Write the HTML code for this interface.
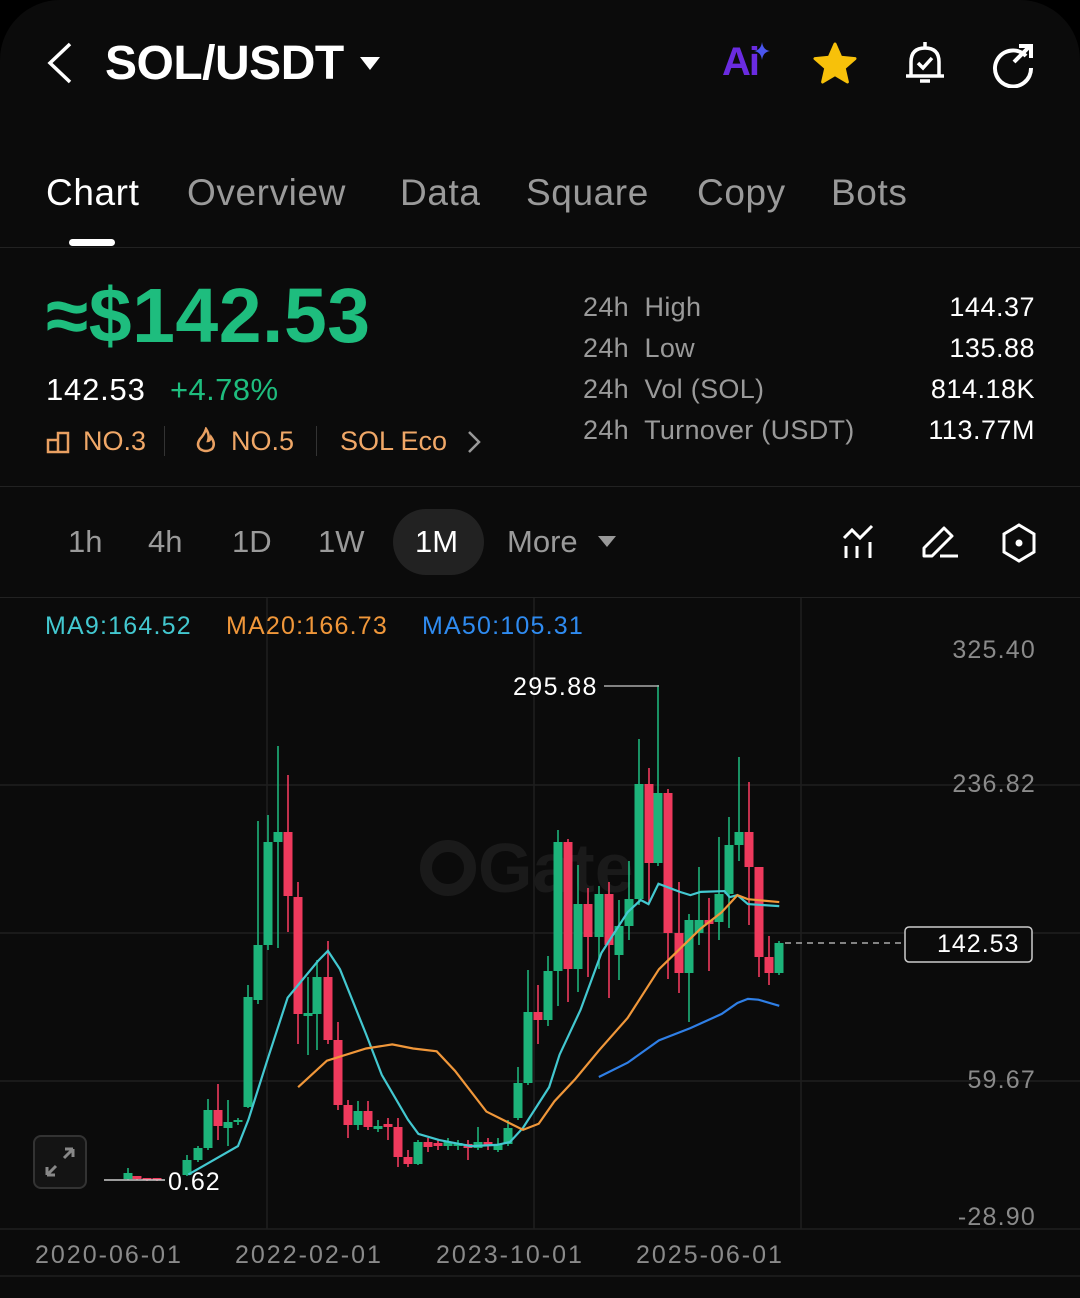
<!DOCTYPE html>
<html><head><meta charset="utf-8"><style>
*{margin:0;padding:0;box-sizing:border-box}
body{width:1080px;height:1298px;background:#000;font-family:"Liberation Sans",sans-serif;overflow:hidden;position:relative}
.pg{position:absolute;left:0;top:0;width:1080px;height:1298px;background:#0b0b0b;border-radius:60px 60px 0 0}
.a{position:absolute;white-space:nowrap}
.g{color:#9a9a9a}
.w{color:#fff}
.tab{letter-spacing:0.6px}
.ax{font-size:25px;color:#8a8a8a;letter-spacing:1.2px}
.dt{font-size:25px;color:#8a8a8a;letter-spacing:2px}
</style></head><body><div class="pg">
<!-- header -->
<svg class="a" style="left:44px;top:42px" width="30" height="42" viewBox="0 0 30 42"><path d="M26 2 L6 21 L26 40" fill="none" stroke="#fff" stroke-width="3.5"/></svg>
<div class="a w" style="left:105px;top:36px;font-size:48px;font-weight:bold;letter-spacing:-0.5px">SOL/USDT</div>
<svg class="a" style="left:359px;top:56px" width="22" height="16"><path d="M1 1 L21 1 L11 14Z" fill="#fff"/></svg>
<div class="a" style="left:722px;top:40px;font-size:40px;font-weight:bold;color:#6a2be0;letter-spacing:-2px">Ai</div>
<svg class="a" style="left:754px;top:42px" width="16" height="18"><path d="M8 0 Q9 8 16 9 Q9 10 8 18 Q7 10 0 9 Q7 8 8 0Z" fill="#4a56f0"/></svg>
<svg class="a" style="left:810px;top:40px" width="50" height="48" viewBox="0 0 24 24"><path d="M12 2 L14.9 8.6 L22 9.3 L16.6 14 L18.2 21 L12 17.3 L5.8 21 L7.4 14 L2 9.3 L9.1 8.6Z" fill="#f7c10a" stroke="#f7c10a" stroke-width="1.5" stroke-linejoin="round"/></svg>
<svg class="a" style="left:900px;top:38px" width="50" height="52" viewBox="0 0 50 52"><path d="M25 4 V9 M11 38 V24 Q11 10 25 10 Q39 10 39 24 V38 Z M6 38 H44 M20 43 H30" fill="none" stroke="#fff" stroke-width="3.5" stroke-linejoin="round"/><path d="M18 25 L23 30 L32 20" fill="none" stroke="#fff" stroke-width="3.5"/></svg>
<svg class="a" style="left:990px;top:42px" width="48" height="46" viewBox="0 0 48 46"><path d="M36 14 A18 18 0 1 0 41 26" fill="none" stroke="#fff" stroke-width="4"/><path d="M24 20 L40 4 M29 4 H41 V16" fill="none" stroke="#fff" stroke-width="4"/></svg>
<!-- tabs -->
<div class="a w tab" style="left:46px;top:172px;font-size:37px">Chart</div>
<div class="a g tab" style="left:187px;top:172px;font-size:37px">Overview</div>
<div class="a g tab" style="left:400px;top:172px;font-size:37px">Data</div>
<div class="a g tab" style="left:526px;top:172px;font-size:37px">Square</div>
<div class="a g tab" style="left:697px;top:172px;font-size:37px">Copy</div>
<div class="a g tab" style="left:831px;top:172px;font-size:37px">Bots</div>
<div class="a" style="left:69px;top:239px;width:46px;height:7px;background:#fff;border-radius:4px"></div>
<div class="a" style="left:0;top:247px;width:1080px;height:1px;background:#222"></div>
<!-- price -->
<div class="a" style="left:46px;top:272px;font-size:77px;font-weight:bold;color:#1ebd7e;letter-spacing:0.5px">≈$142.53</div>
<div class="a w" style="left:46px;top:372px;font-size:31px;letter-spacing:0.8px">142.53</div>
<div class="a" style="left:170px;top:372px;font-size:31px;color:#1ebd7e;letter-spacing:0.4px">+4.78%</div>
<svg class="a" style="left:46px;top:430px" width="24" height="24"><path d="M2 10 H12 V22 H2Z M12 22 H22 V3 H12 V10" fill="none" stroke="#e9a062" stroke-width="2.5"/></svg>
<div class="a" style="left:83px;top:426px;font-size:27px;color:#f0a868">NO.3</div>
<div class="a" style="left:164px;top:426px;width:1px;height:30px;background:#333"></div>
<svg class="a" style="left:194px;top:427px" width="24" height="26"><path d="M12 2 Q10 8 6 12 Q2 18 6 22 Q12 26 18 22 Q22 17 17 10 Q16 14 14 14 Q16 8 12 2Z" fill="none" stroke="#e9a062" stroke-width="2.5"/></svg>
<div class="a" style="left:231px;top:426px;font-size:27px;color:#f0a868">NO.5</div>
<div class="a" style="left:316px;top:426px;width:1px;height:30px;background:#333"></div>
<div class="a" style="left:340px;top:426px;font-size:27px;color:#f0a868">SOL Eco</div>
<svg class="a" style="left:466px;top:430px" width="16" height="24"><path d="M3 2 L13 12 L3 22" fill="none" stroke="#999" stroke-width="2.5"/></svg>
<div class="a g" style="left:583px;top:287px;font-size:27px;line-height:41px;letter-spacing:0.3px">24h&nbsp; High<br>24h&nbsp; Low<br>24h&nbsp; Vol (SOL)<br>24h&nbsp; Turnover (USDT)</div>
<div class="a w" style="right:45px;top:287px;font-size:27px;line-height:41px;text-align:right;letter-spacing:0.5px">144.37<br>135.88<br>814.18K<br>113.77M</div>
<div class="a" style="left:0;top:486px;width:1080px;height:1px;background:#222"></div>
<!-- timeframes -->
<div class="a g" style="left:68px;top:524px;font-size:31px">1h</div>
<div class="a g" style="left:148px;top:524px;font-size:31px">4h</div>
<div class="a g" style="left:232px;top:524px;font-size:31px">1D</div>
<div class="a g" style="left:318px;top:524px;font-size:31px">1W</div>
<div class="a" style="left:393px;top:509px;width:91px;height:66px;border-radius:33px;background:#222"></div>
<div class="a w" style="left:415px;top:524px;font-size:31px">1M</div>
<div class="a g" style="left:507px;top:524px;font-size:31px">More</div>
<svg class="a" style="left:598px;top:536px" width="18" height="12"><path d="M0 0 H18 L9 11Z" fill="#999"/></svg>
<svg class="a" style="left:840px;top:524px" width="40" height="38" viewBox="0 0 40 38"><path d="M4 14 L12 6 L20 14 L32 2 M6 22 V34 M17 22 V34 M30 18 V34" fill="none" stroke="#fff" stroke-width="3"/></svg>
<svg class="a" style="left:920px;top:524px" width="42" height="36" viewBox="0 0 42 36"><path d="M4 32 V24 L24 4 L32 12 L12 32 Z M20 32 H38" fill="none" stroke="#fff" stroke-width="3" stroke-linejoin="round"/></svg>
<svg class="a" style="left:1000px;top:522px" width="38" height="42" viewBox="0 0 38 42"><path d="M19 3 L34 12 V30 L19 39 L4 30 V12Z" fill="none" stroke="#fff" stroke-width="3"/><circle cx="19" cy="21" r="3.5" fill="#fff"/></svg>
<div class="a" style="left:0;top:597px;width:1080px;height:1px;background:#222"></div>
<!-- chart -->
<svg class="a" style="left:0;top:0" width="1080" height="1298">
<g stroke="#1f1f1f" stroke-width="1.5">
<line x1="0" y1="785" x2="1080" y2="785"/><line x1="0" y1="933" x2="1080" y2="933"/><line x1="0" y1="1081" x2="1080" y2="1081"/><line x1="0" y1="1229" x2="1080" y2="1229"/><line x1="0" y1="1276" x2="1080" y2="1276"/>
<line x1="267" y1="598" x2="267" y2="1229"/><line x1="534" y1="598" x2="534" y2="1229"/><line x1="801" y1="598" x2="801" y2="1229"/>
</g>
<circle cx="448" cy="868" r="22" fill="none" stroke="#1a1a1a" stroke-width="12"/>
<text x="478" y="892" font-family="Liberation Sans" font-weight="bold" font-size="70" fill="#1a1a1a">Gate</text>
<g id="cs"></g>
<g transform="translate(0,660) scale(0.523,0.4068)" fill="none" stroke-width="2.2">
<path vector-effect="non-scaling-stroke" stroke="#43c8d0" d="M360 1265 L455 1195 L475 1130 L512 980 L550 830 L608 740 L627 715 L650 760 L700 920 L730 1020 L780 1130 L800 1165 L840 1180 L900 1195 L950 1192 L975 1185 L1000 1150 L1050 1050 L1070 970 L1110 860 L1150 720 L1200 620 L1225 590 L1240 600 L1259 550 L1300 570 L1320 578 L1340 570 L1385 568 L1395 583 L1410 578 L1430 600 L1490 605"/>
<path vector-effect="non-scaling-stroke" stroke="#f0973a" d="M570 1050 L625 985 L700 955 L750 945 L790 955 L835 962 L870 1010 L930 1110 L1000 1155 L1030 1140 L1060 1085 L1100 1030 L1145 960 L1200 880 L1240 800 L1260 760 L1300 710 L1340 660 L1380 620 L1410 578 L1430 588 L1490 595"/>
<path vector-effect="non-scaling-stroke" stroke="#2f7fe6" d="M1145 1025 L1200 990 L1260 935 L1320 905 L1380 870 L1410 843 L1430 833 L1450 835 L1490 850"/>
</g>
<line x1="104" y1="1180" x2="165" y2="1180" stroke="#ccc" stroke-width="1.5"/>
<line x1="604" y1="686" x2="659" y2="686" stroke="#aaa" stroke-width="1.5"/>
<line x1="785" y1="943" x2="905" y2="943" stroke="#aaa" stroke-width="1.5" stroke-dasharray="6 5"/>
<rect x="905" y="927" width="127" height="35" rx="4" fill="#0b0b0b" stroke="#ccc" stroke-width="1.5"/>
<rect x="34" y="1136" width="52" height="52" rx="7" fill="#141414" stroke="#333" stroke-width="2"/>
<path d="M47 1175 L56 1166 M47 1175 V1167 M47 1175 H55 M73 1149 L64 1158 M73 1149 V1157 M73 1149 H65" stroke="#888" stroke-width="3" fill="none"/>
</svg>
<div class="a" style="left:45px;top:612px;font-size:25px;color:#43c8d0;letter-spacing:1.2px">MA9:164.52</div>
<div class="a" style="left:226px;top:612px;font-size:25px;color:#f0973a;letter-spacing:1.2px">MA20:166.73</div>
<div class="a" style="left:422px;top:612px;font-size:25px;color:#2f8bf0;letter-spacing:1.2px">MA50:105.31</div>
<div class="a ax" style="right:44px;top:636px">325.40</div>
<div class="a ax" style="right:44px;top:770px">236.82</div>
<div class="a ax" style="right:44px;top:1066px">59.67</div>
<div class="a ax" style="right:44px;top:1203px">-28.90</div>
<div class="a w" style="left:937px;top:930px;font-size:25px;letter-spacing:1px">142.53</div>
<div class="a w" style="left:513px;top:673px;font-size:25px;letter-spacing:1.4px">295.88</div>
<div class="a w" style="left:168px;top:1168px;font-size:25px;letter-spacing:1px">0.62</div>
<div class="a dt" style="left:35px;top:1241px">2020-06-01</div>
<div class="a dt" style="left:235px;top:1241px">2022-02-01</div>
<div class="a dt" style="left:436px;top:1241px">2023-10-01</div>
<div class="a dt" style="left:636px;top:1241px">2025-06-01</div>
</div>
<script>
var G="#1db37a",R="#ef3a5d";
var c=[[128,1173,1179,1168,1180,G],[137,1176,1179,1176,1180,R],[147,1178,1180,1178,1181,R],[157,1178,1180,1178,1181,R],
[187,1160,1175,1155,1176,G],[198,1148,1160,1146,1162,G],[208,1110,1148,1099,1150,G],[218,1110,1126,1084,1140,R],[228,1122,1128,1100,1146,G],[238,1120,1122,1118,1125,G],
[248,997,1107,985,1108,G],[258,945,1000,821,1004,G],[268,842,945,815,950,G],[278,832,842,746,948,G],[288,832,896,775,932,R],[298,897,1014,882,1044,R],
[308,1013,1016,977,1055,G],[317,977,1014,960,1050,G],[328,977,1040,941,1044,R],[338,1040,1105,1022,1110,R],[348,1105,1125,1100,1138,R],[358,1111,1125,1101,1130,G],
[368,1111,1127,1101,1130,R],[378,1126,1129,1120,1132,G],[388,1124,1127,1118,1140,R],[398,1127,1157,1118,1167,R],[408,1157,1164,1150,1167,R],[418,1142,1164,1140,1165,G],
[428,1142,1147,1138,1152,R],[438,1143,1146,1140,1150,R],[448,1142,1146,1138,1150,G],[458,1143,1146,1140,1150,G],[468,1144,1148,1140,1160,R],[478,1142,1148,1127,1150,G],
[488,1142,1145,1138,1150,R],[498,1144,1150,1138,1152,G],[508,1128,1144,1120,1146,G],[518,1083,1118,1067,1120,G],[528,1012,1083,970,1085,G],[538,1012,1020,985,1044,R],
[548,971,1020,956,1026,G],[558,842,971,830,1006,G],[568,842,969,839,1002,R],[578,904,969,865,992,G],[588,904,937,888,977,R],[599,894,937,886,969,G],
[609,894,945,882,998,R],[619,926,955,900,980,G],[629,899,926,861,940,G],[639,784,899,739,905,G],[649,784,863,768,904,R],[658,793,863,685,866,G],
[668,793,933,789,979,R],[679,933,973,882,993,R],[689,920,973,914,1022,G],[699,920,933,867,945,G],[709,920,924,898,971,R],[719,894,922,837,940,G],
[729,845,894,817,928,G],[739,832,845,757,861,G],[749,832,867,782,925,R],[759,867,957,867,977,R],[769,957,973,936,985,R],[779,943,973,941,975,G]];
var s="";c.forEach(function(k){s+='<line x1="'+k[0]+'" y1="'+k[3]+'" x2="'+k[0]+'" y2="'+k[4]+'" stroke="'+k[5]+'" stroke-width="1.6"/><rect x="'+(k[0]-4.5)+'" y="'+k[1]+'" width="9" height="'+Math.max(2,k[2]-k[1])+'" fill="'+k[5]+'"/>';});
document.getElementById("cs").innerHTML=s;
</script>
</body></html>
